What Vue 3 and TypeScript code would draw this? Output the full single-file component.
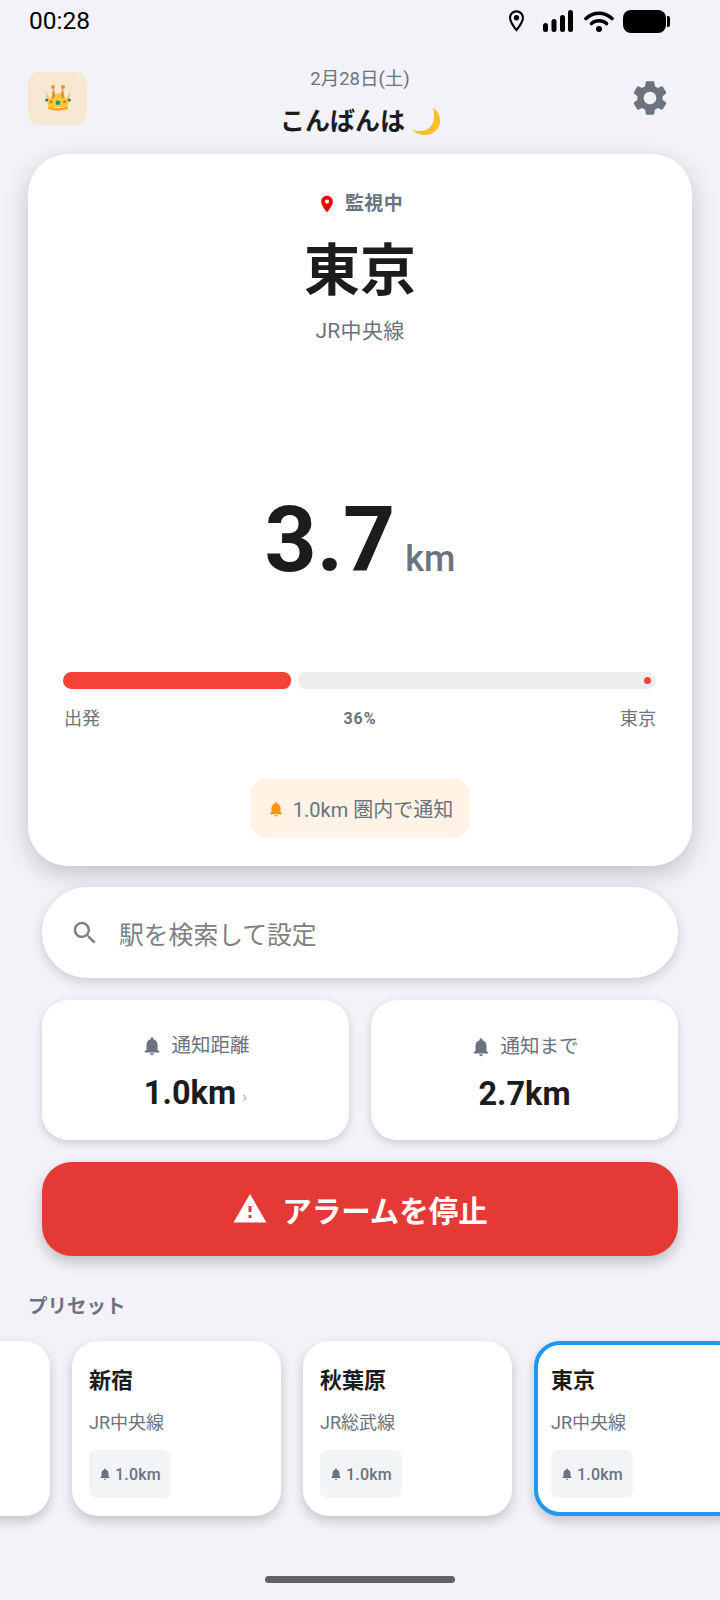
<!-- 駅アラーム メイン画面 -->
<template>
  <div class="screen">
    <div class="status-bar">
      <span class="clock">00:28</span>
      <div class="status-icons">
        <svg class="st-pin" viewBox="5 2 14 20"><path d="M12 2C8.13 2 5 5.13 5 9c0 5.25 7 13 7 13s7-7.75 7-13c0-3.87-3.13-7-7-7zM7 9c0-2.76 2.24-5 5-5s5 2.24 5 5c0 2.88-2.88 7.19-5 9.88C9.92 16.21 7 11.85 7 9z" /><circle cx="12" cy="9" r="2.5" /></svg>
        <svg class="st-signal" viewBox="0 0 30 22"><rect x="0" y="13" width="5" height="9" rx="2.5" /><rect x="8.500" y="9" width="5" height="13" rx="2.5" /><rect x="17" y="5" width="5" height="17" rx="2.5" /><rect x="25" y="0" width="5" height="22" rx="2.5" /></svg>
        <svg class="st-wifi" viewBox="0 0 30 22"><path d="M2 8.500C9.500 1.500 20.500 1.500 28 8.500" /><path d="M7.500 13.500C11.800 9.800 18.200 9.800 22.500 13.500" /><circle cx="15" cy="19" r="3" class="fill" /></svg>
        <div class="battery"><span class="battery-body"></span><span class="battery-nub"></span></div>
      </div>
    </div>

    <header class="header">
      <div class="avatar">
        <svg viewBox="0 0 28 28" width="28" height="28">
          <path fill="#e8912d" d="M9 4L7.500 14 5 19h18l-2.500-5L19 4l-3 8-2-3-2 3z" />
          <circle cx="9" cy="3" r="2" fill="#e8912d" />
          <circle cx="19" cy="3" r="2" fill="#e8912d" />
          <path fill="#fdc93a" d="M1.500 7L4.500 23h19l3-16-4.500 8-4-1-4-6-4 6-4 1z" />
          <path fill="#f9a825" d="M4.500 22.500q9.500 3 19 0l.5 2.500q-10 3.500-20 0z" />
          <circle cx="2.700" cy="16" r="1.600" fill="#16857a" />
          <circle cx="7" cy="17.700" r="1.300" fill="#e4572e" />
          <circle cx="14" cy="18.700" r="2.300" fill="#16997a" />
          <circle cx="20.500" cy="17.700" r="1.300" fill="#e4572e" />
          <circle cx="25.300" cy="16" r="1.600" fill="#16857a" />
        </svg>
      </div>
      <div class="greeting">
        <span class="date">2月28日(土)</span>
        <span class="hello">
          こんばんは
          <svg class="moon" viewBox="0 0 28 27"><path fill="#fdbf2d" d="M21 0C26 3 28 8 28 13 28 21 21 27 13 27 8 27 3 25 0 22 3 23 6 23 8 23 16 23 22 17 22 9 22 6 22 3 21 0z" /></svg>
        </span>
      </div>
      <svg class="gear" viewBox="0 0 24 24"><path d="M19.14,12.94c0.04-0.3,0.06-0.61,0.06-0.94c0-0.32-0.02-0.64-0.07-0.94l2.03-1.58c0.18-0.14,0.23-0.41,0.12-0.61l-1.92-3.32c-0.12-0.22-0.37-0.29-0.59-0.22l-2.39,0.96c-0.5-0.38-1.03-0.7-1.62-0.94L14.4,2.81c-0.04-0.24-0.24-0.41-0.48-0.41h-3.84c-0.24,0-0.43,0.17-0.47,0.41L9.25,5.35C8.66,5.59,8.12,5.92,7.63,6.29L5.24,5.33c-0.22-0.08-0.47,0-0.59,0.22L2.74,8.87C2.62,9.08,2.66,9.34,2.86,9.48l2.03,1.58C4.84,11.36,4.8,11.69,4.8,12s0.02,0.64,0.07,0.94l-2.03,1.58c-0.18,0.14-0.23,0.41-0.12,0.61l1.92,3.32c0.12,0.22,0.37,0.29,0.59,0.22l2.39-0.96c0.5,0.38,1.03,0.7,1.62,0.94l0.36,2.54c0.05,0.24,0.24,0.41,0.48,0.41h3.84c0.24,0,0.44-0.17,0.47-0.41l0.36-2.54c0.59-0.24,1.13-0.56,1.62-0.94l2.39,0.96c0.22,0.08,0.47,0,0.59-0.22l1.92-3.32c0.12-0.22,0.07-0.47-0.12-0.61L19.14,12.94z M12,15.6c-1.98,0-3.6-1.62-3.6-3.6s1.62-3.6,3.6-3.6s3.6,1.62,3.6,3.6S13.98,15.6,12,15.6z" /></svg>
    </header>

    <section class="main-card">
      <div class="watching">
        <svg class="pin" viewBox="0 0 24 24"><path d="M12 2C8.13 2 5 5.130 5 9c0 5.250 7 13 7 13s7-7.750 7-13c0-3.870-3.130-7-7-7zm0 9.500c-1.380 0-2.500-1.120-2.500-2.500s1.120-2.500 2.500-2.500 2.500 1.120 2.500 2.500-1.120 2.500-2.500 2.500z" /></svg>
        <span>監視中</span>
      </div>
      <div class="station">東京</div>
      <div class="line">JR中央線</div>
      <div class="distance"><span class="dist-num">3.7</span><span class="dist-unit">km</span></div>
      <div class="track">
        <div class="track-fill" :style="{ width: progress * 100 + '%' }"></div>
        <div class="track-rest"><span class="stop-dot"></span></div>
      </div>
      <div class="track-labels">
        <span>出発</span>
        <span class="percent">36%</span>
        <span>東京</span>
      </div>
      <div class="notice">
        <svg class="notice-bell" viewBox="0 0 24 24"><path :d="bellPath" /></svg>
        <span>1.0km 圏内で通知</span>
      </div>
    </section>

    <div class="content">
      <div class="search">
        <svg class="search-icon" viewBox="0 0 24 24"><path d="M15.5 14h-.79l-.28-.27C15.41 12.59 16 11.11 16 9.5 16 5.91 13.09 3 9.5 3S3 5.910 3 9.500 5.910 16 9.500 16c1.610 0 3.090-.59 4.230-1.570l.27.28v.79l5 4.990L20.490 19l-4.990-5zm-6 0C7.010 14 5 11.990 5 9.500S7.010 5 9.500 5 14 7.010 14 9.500 11.990 14 9.500 14z" /></svg>
        <span>駅を検索して設定</span>
      </div>

      <div class="stats">
        <div class="stat">
          <div class="stat-label"><svg viewBox="0 0 24 24"><path :d="bellPath" /></svg>通知距離</div>
          <div class="stat-value">1.0km<span class="chevron">›</span></div>
        </div>
        <div class="stat">
          <div class="stat-label"><svg viewBox="0 0 24 24"><path :d="bellPath" /></svg>通知まで</div>
          <div class="stat-value">2.7km</div>
        </div>
      </div>

      <button class="stop-btn">
        <svg viewBox="0 0 24 24"><path d="M1 21h22L12 2 1 21zm12-3h-2v-2h2v2zm0-4h-2v-4h2v4z" /></svg>
        アラームを停止
      </button>
    </div>

    <div class="preset-title">プリセット</div>
    <div class="presets">
      <!-- 左へスクロールされて端だけ見えているカード -->
      <div class="preset"></div>
      <div v-for="p in presets" :key="p.name" :class="['preset', { active: p.active }]">
        <div class="preset-name">{{ p.name }}</div>
        <div class="preset-line">{{ p.line }}</div>
        <div class="preset-chip"><svg viewBox="0 0 24 24"><path :d="bellPath" /></svg>{{ p.range }}</div>
      </div>
    </div>

    <div class="home-bar"></div>
  </div>
</template>

<script setup lang="ts">
interface Preset {
  name: string;
  line: string;
  range: string;
  active?: boolean;
}

const bellPath =
  'M12 22c1.100 0 2-.9 2-2h-4c0 1.100.9 2 2 2zm6-6v-5c0-3.070-1.630-5.640-4.500-6.320V4c0-.83-.67-1.500-1.500-1.500s-1.500.67-1.500 1.500v.68C7.640 5.360 6 7.920 6 11v5l-2 2v1h16v-1l-2-2z';

const progress = 0.385;

const presets: Preset[] = [
  { name: '新宿', line: 'JR中央線', range: '1.0km' },
  { name: '秋葉原', line: 'JR総武線', range: '1.0km' },
  { name: '東京', line: 'JR中央線', range: '1.0km', active: true },
];
</script>

<style>
html, body { margin: 0; background: #f2f2f8; }
</style>

<style scoped>
.screen {
  background: #f2f2f8;
  color: #1c1c1e;
  font-family: Roboto, "Noto Sans CJK JP", sans-serif;
  height: 1600px;
  overflow: hidden;
  position: relative;
  width: 720px;
}
svg { display: block; flex: none; }

.status-bar {
  align-items: center;
  box-sizing: border-box;
  display: flex;
  height: 42px;
  justify-content: space-between;
  padding: 0 50px 0 29px;
}
.clock { color: #000; font-size: 24.5px; margin-top: -2px; }
.status-icons { align-items: center; display: flex; }
.st-pin { height: 22px; width: 15px; }
.st-signal { height: 22px; margin-left: 19px; width: 30px; }
.st-wifi { height: 22px; margin-left: 11px; width: 30px; }
.st-wifi path { fill: none; stroke: #000; stroke-linecap: round; stroke-width: 3.600px; }
.battery { align-items: center; display: flex; margin-left: 9px; }
.battery-body { background: #000; border-radius: 8px; display: block; height: 23px; width: 43px; }
.battery-nub { background: #000; border-radius: 0 2px 2px 0; display: block; height: 11px; margin-left: 1px; width: 3px; }

.header {
  align-items: center;
  display: flex;
  height: 84px;
  justify-content: space-between;
  margin-top: 14px;
  padding: 0 49px 0 28px;
}
.avatar {
  align-items: center;
  background: #f6e8d3;
  border-radius: 12px;
  display: flex;
  height: 53px;
  justify-content: center;
  width: 59px;
}
.greeting { align-items: center; display: flex; flex-direction: column; gap: 16px; margin-left: 4px; padding-top: 7px; }
.date { color: #6b7280; font-size: 18.5px; line-height: 24px; }
.hello { align-items: center; display: flex; font-size: 25px; font-weight: 700; gap: 7px; line-height: 30px; }
.moon { height: 27px; width: 28px; }
.gear { fill: #6b7280; height: 42px; width: 42px; }

.main-card {
  align-items: stretch;
  background: #fff;
  border-radius: 40px;
  box-shadow: 0 8px 24px rgba(0, 0, 0, 0.2);
  box-sizing: border-box;
  display: flex;
  flex-direction: column;
  height: 712px;
  margin: 14px 28px 0;
  padding: 37px 36px 0;
}
.watching {
  align-items: center;
  color: #6b7280;
  display: flex;
  font-size: 19px;
  font-weight: 700;
  gap: 8px;
  justify-content: center;
  letter-spacing: 0.4px;
  line-height: 26px;
}
.pin { fill: #f00000; height: 20px; width: 20px; }
.station { font-size: 56px; font-weight: 700; line-height: 70px; margin-top: 19px; text-align: center; }
.line { color: #6b7280; font-size: 21px; letter-spacing: 0.3px; line-height: 28px; margin-top: 11px; text-align: center; }
.distance { align-items: baseline; display: flex; justify-content: center; margin-top: 139px; }
.dist-num { font-size: 91px; font-weight: 700; line-height: 112px; }
.dist-unit { color: #6b7280; font-size: 36px; font-weight: 500; margin-left: 10px; }
.track { display: flex; gap: 7px; height: 17px; margin-top: 76px; margin-left: -1px; }
.track-fill { background: #f44336; border-radius: 9px 8px 8px 9px; flex: none; }
.track-rest { align-items: center; background: #eeeeee; border-radius: 8px 9px 9px 8px; display: flex; flex: 1; justify-content: flex-end; padding-right: 5px; }
.stop-dot { background: #f44336; border-radius: 50%; display: block; height: 7px; width: 7px; }
.track-labels {
  align-items: center;
  color: #6b7280;
  display: flex;
  font-size: 18px;
  justify-content: space-between;
  line-height: 24px;
  margin-top: 18px;
}
.percent { font-size: 16px; font-weight: 700; letter-spacing: 1px; }
.notice {
  align-items: center;
  align-self: center;
  background: #fff3e5;
  border-radius: 16px;
  color: #6b7280;
  display: flex;
  font-size: 20px;
  gap: 8px;
  height: 59px;
  margin-top: 48px;
  padding: 0 17px;
}
.notice-bell { fill: #ff9800; height: 18px; width: 18px; }

.content { display: flex; flex-direction: column; gap: 22px; margin: 21px 42px 0; }
.search {
  align-items: center;
  background: #fff;
  border-radius: 46px;
  box-shadow: 0 4px 12px rgba(0, 0, 0, 0.16);
  color: #808080;
  display: flex;
  font-size: 24.8px;
  gap: 19px;
  height: 91px;
  padding-left: 28px;
}
.search-icon { fill: #808080; height: 30px; width: 30px; }
.stats { display: grid; gap: 22px; grid-template-columns: 1fr 1fr; }
.stat {
  align-items: center;
  background: #fff;
  border-radius: 26px;
  box-shadow: 0 3px 8px rgba(0, 0, 0, 0.16);
  box-sizing: border-box;
  display: flex;
  flex-direction: column;
  gap: 14px;
  height: 140px;
  justify-content: center;
  padding-top: 8px;
}
.stat-label { align-items: center; color: #6b7280; display: flex; font-size: 19.5px; gap: 8px; line-height: 26px; }
.stat-label svg { fill: #6b7280; height: 22px; width: 22px; }
.stat-value { font-size: 32.5px; font-weight: 700; line-height: 40px; }
.chevron { color: #b0b0b0; font-size: 17px; font-weight: 400; margin-left: 6px; vertical-align: 2px; }
.stop-btn {
  align-items: center;
  background: #e53935;
  border: 0;
  border-radius: 30px;
  box-shadow: 0 6px 14px rgba(0, 0, 0, 0.22);
  color: #fff;
  display: flex;
  font-family: inherit;
  font-size: 29.5px;
  font-weight: 700;
  gap: 14px;
  height: 94px;
  justify-content: center;
  padding: 0;
}
.stop-btn svg { fill: #fff; height: 36px; width: 36px; }

.preset-title { color: #6b7280; font-size: 19.5px; font-weight: 700; line-height: 26px; margin: 38px 0 0 28px; }
.presets { display: flex; gap: 22px; margin: 21px 0 0 -159px; }
.preset {
  background: #fff;
  border-radius: 26px;
  box-shadow: 0 5px 12px rgba(0, 0, 0, 0.2);
  box-sizing: border-box;
  flex: none;
  height: 175px;
  padding: 26px 17px 0;
  width: 209px;
}
.preset.active { border: 4px solid #2196f3; padding: 22px 13px 0; }
.preset-name { font-size: 22px; font-weight: 700; line-height: 28px; }
.preset-line { color: #6b7280; font-size: 18px; line-height: 24px; margin-top: 16px; }
.preset-chip {
  align-items: center;
  background: #f3f4f6;
  border-radius: 8px;
  color: #6b7280;
  display: inline-flex;
  font-size: 16px;
  font-weight: 500;
  gap: 3px;
  height: 48px;
  letter-spacing: 0.2px;
  margin-top: 15px;
  padding: 0 10px 0 9px;
}
.preset-chip svg { fill: #6b7280; height: 14px; width: 14px; }

.home-bar {
  background: #636366;
  border-radius: 4px;
  bottom: 17px;
  height: 7px;
  left: 265px;
  position: absolute;
  width: 190px;
}
</style>
